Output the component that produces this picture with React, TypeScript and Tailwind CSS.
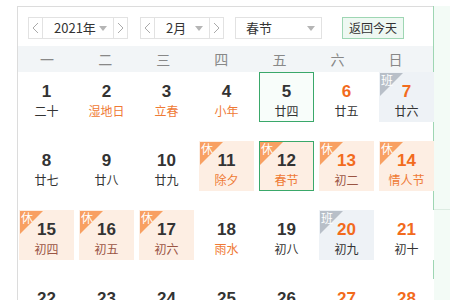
import React from "react";

type Day = {
  d: number;
  l: string;
  fest?: boolean;
  we?: boolean;
  tag?: "休" | "班";
  today?: boolean;
  sel?: boolean;
};

const days: Day[] = [
  { d: 1, l: "二十" },
  { d: 2, l: "湿地日", fest: true },
  { d: 3, l: "立春", fest: true },
  { d: 4, l: "小年", fest: true },
  { d: 5, l: "廿四", today: true },
  { d: 6, l: "廿五", we: true },
  { d: 7, l: "廿六", we: true, tag: "班" },
  { d: 8, l: "廿七" },
  { d: 9, l: "廿八" },
  { d: 10, l: "廿九" },
  { d: 11, l: "除夕", fest: true, tag: "休" },
  { d: 12, l: "春节", fest: true, tag: "休", sel: true },
  { d: 13, l: "初二", we: true, tag: "休" },
  { d: 14, l: "情人节", we: true, fest: true, tag: "休" },
  { d: 15, l: "初四", tag: "休" },
  { d: 16, l: "初五", tag: "休" },
  { d: 17, l: "初六", tag: "休" },
  { d: 18, l: "雨水", fest: true },
  { d: 19, l: "初八" },
  { d: 20, l: "初九", we: true, tag: "班" },
  { d: 21, l: "初十", we: true },
  { d: 22, l: "十一" },
  { d: 23, l: "十二" },
  { d: 24, l: "十三" },
  { d: 25, l: "十四" },
  { d: 26, l: "元宵节", fest: true },
  { d: 27, l: "十六", we: true },
  { d: 28, l: "十七", we: true },
];

const weekdays = ["一", "二", "三", "四", "五", "六", "日"];

function Chevron({ left }: { left?: boolean }) {
  return (
    <svg width="7" height="12" viewBox="0 0 7 12">
      <polyline
        points={left ? "6,1 1,6 6,11" : "1,1 6,6 1,11"}
        fill="none"
        stroke="#aaa"
        strokeWidth="1"
      />
    </svg>
  );
}

function Caret() {
  return (
    <svg width="8" height="5" viewBox="0 0 8 5">
      <polygon points="0,0 8,0 4,5" fill="#b5b5b5" />
    </svg>
  );
}

function Picker({ label, width }: { label: string; width: string }) {
  return (
    <div className="flex h-[22px]">
      <button className="flex w-[15px] items-center justify-center border border-[#e2e2e2] bg-white">
        <Chevron left />
      </button>
      <div className={`flex items-center justify-between border-y border-[#e2e2e2] bg-white pl-[11px] pr-[6px] text-[13px] text-[#333] ${width}`}>
        <span>{label}</span>
        <Caret />
      </div>
      <button className="flex w-[15px] items-center justify-center border border-[#e2e2e2] bg-white">
        <Chevron />
      </button>
    </div>
  );
}

function Cell({ day }: { day: Day }) {
  const bg =
    day.tag === "休" ? "bg-[#fdeee3]" : day.tag === "班" ? "bg-[#eef2f6]" : day.today ? "bg-[#f8fdfa]" : "bg-white";
  const border = day.today || day.sel ? "border border-[#3aa86a]" : "border border-transparent";
  const numColor = day.we ? "text-[#f26b1d]" : "text-[#333]";
  const lunarColor = day.fest ? "text-[#ef7a35]" : day.tag === "休" ? "text-[#9a5443]" : "text-[#333]";

  return (
    <div className={`relative flex h-[50px] flex-col items-center pt-[9px] ${bg} ${border}`}>
      {day.tag && (
        <>
          <span
            className={`absolute left-0 top-0 h-0 w-0 border-r-[23px] border-t-[23px] border-r-transparent ${
              day.tag === "休" ? "border-t-[#f8a062]" : "border-t-[#b8bfc8]"
            }`}
          />
          <span className="absolute left-[1px] top-[-1px] text-[12px] leading-[16px] text-white">{day.tag}</span>
        </>
      )}
      <span className={`font-['Liberation_Sans',sans-serif] text-[17px] font-bold leading-[20px] ${numColor}`}>
        {day.d}
      </span>
      <span className={`mt-[1px] text-[12px] leading-[16px] ${lunarColor}`}>{day.l}</span>
    </div>
  );
}

export default function App() {
  return (
    <div className="h-[300px] w-[450px] overflow-hidden bg-white font-['Noto_Sans_CJK_SC','Liberation_Sans',sans-serif]">
      <div className="flex h-full pt-[6px]">
        <div className="w-[416px] ml-[17px] border-l border-t border-[#dcdcdc]">
          {/* toolbar */}
          <div className="flex h-[39px] items-start gap-[12px] pl-[10px] pt-[10px]">
            <Picker label="2021年" width="w-[70px]" />
            <Picker label="2月" width="w-[54px]" />
            <div className="ml-[-1px] flex h-[22px] w-[87px] items-center justify-between border border-[#e2e2e2] bg-white pl-[10px] pr-[6px] text-[13px] text-[#333]">
              <span>春节</span>
              <Caret />
            </div>
            <button className="ml-[8px] flex h-[22px] w-[62px] items-center justify-center border border-[#9ed6b3] bg-[#eef8f2] text-[12px] text-[#333]">
              返回今天
            </button>
          </div>

          {/* weekdays */}
          <div className="grid h-[26px] grid-cols-[repeat(7,58.1px)] items-center bg-[#f2f5f7] text-[14px] text-[#888]">
            {weekdays.map((w) => (
              <span key={w} className="text-center">
                {w}
              </span>
            ))}
          </div>

          {/* days */}
          <div className="grid grid-cols-[repeat(7,55px)] gap-x-[5px] gap-y-[19px] pl-[1px]">
            {days.map((day) => (
              <Cell key={day.d} day={day} />
            ))}
          </div>
        </div>

        <div className="flex-1 border-l border-[#9ed6b3] bg-[#f3fbf6]">
          <div className="h-[204px] border-b border-[#dcece2]" />
        </div>
      </div>
    </div>
  );
}
